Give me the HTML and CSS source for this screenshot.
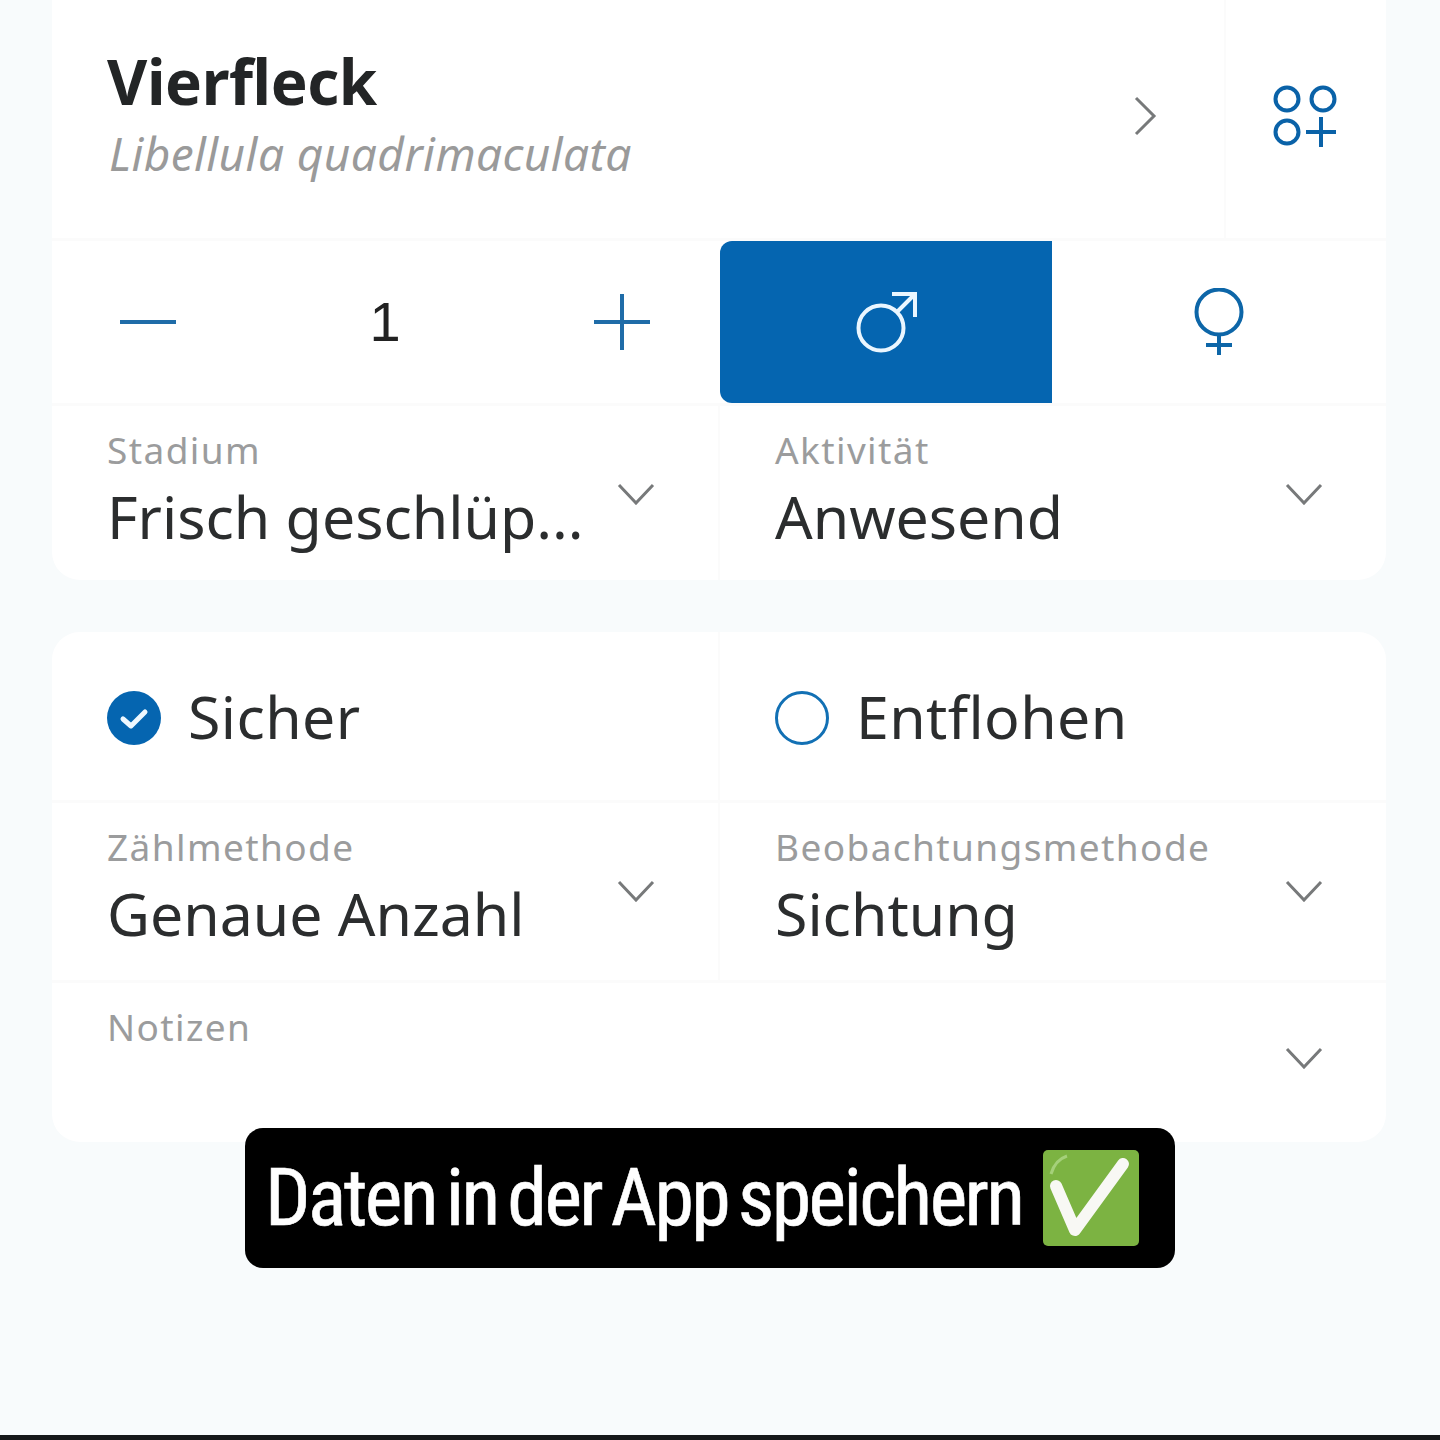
FILE: index.html
```html
<!DOCTYPE html>
<html lang="de">
<head>
<meta charset="utf-8">
<title>Vierfleck</title>
<link rel="stylesheet" href="styles.css">
</head>
<body>
<main class="page">
  <section class="card card-top">
    <header class="species">
      <div class="species-names">
        <h1 class="title">Vierfleck</h1>
        <p class="latin">Libellula quadrimaculata</p>
      </div>
      <svg class="chev-right" viewBox="0 0 24 42"><path d="M3 3 L21 21 L3 39"/></svg>
      <div class="species-action">
        <svg class="groups" viewBox="0 0 64 64"><g><circle cx="14" cy="14" r="11.5"/><circle cx="50" cy="14" r="11.5"/><circle cx="14" cy="47" r="11.5"/><path d="M33 47H63M48 32V62"/></g></svg>
      </div>
    </header>
    <div class="counter-row">
      <div class="stepper">
        <svg class="step" viewBox="0 0 56 56"><path d="M0 28H56"/></svg>
        <span class="count">1</span>
        <svg class="step" viewBox="0 0 56 56"><path d="M0 28H56M28 0V56"/></svg>
      </div>
      <div class="sex sex-on">
        <svg class="male" viewBox="0 0 64 64"><circle cx="27" cy="38" r="22.5"/><path d="M43 22L61 4M38 4H61V27"/></svg>
      </div>
      <div class="sex">
        <svg class="female" viewBox="0 0 52 68"><circle cx="26" cy="24" r="22.5"/><path d="M26 47V67M13 57H39"/></svg>
      </div>
    </div>
    <div class="split">
      <div class="field">
        <div class="field-text"><span class="label">Stadium</span><span class="value">Frisch geschlüp...</span></div>
        <svg class="chev" viewBox="0 0 38 22"><path d="M2 2L19 20L36 2"/></svg>
      </div>
      <div class="field">
        <div class="field-text"><span class="label">Aktivität</span><span class="value">Anwesend</span></div>
        <svg class="chev" viewBox="0 0 38 22"><path d="M2 2L19 20L36 2"/></svg>
      </div>
    </div>
  </section>

  <section class="card card-bottom">
    <div class="split checks">
      <div class="check">
        <svg class="tick" viewBox="0 0 54 54"><circle cx="27" cy="27" r="27"/><path d="M16 28L24 35L38 21"/></svg>
        <span class="check-label">Sicher</span>
      </div>
      <div class="check">
        <svg class="radio" viewBox="0 0 54 54"><circle cx="27" cy="27" r="25.5"/></svg>
        <span class="check-label">Entflohen</span>
      </div>
    </div>
    <div class="split split-mid">
      <div class="field">
        <div class="field-text"><span class="label">Zählmethode</span><span class="value">Genaue Anzahl</span></div>
        <svg class="chev" viewBox="0 0 38 22"><path d="M2 2L19 20L36 2"/></svg>
      </div>
      <div class="field">
        <div class="field-text"><span class="label">Beobachtungsmethode</span><span class="value">Sichtung</span></div>
        <svg class="chev" viewBox="0 0 38 22"><path d="M2 2L19 20L36 2"/></svg>
      </div>
    </div>
    <div class="notes">
      <span class="label">Notizen</span>
      <svg class="chev" viewBox="0 0 38 22"><path d="M2 2L19 20L36 2"/></svg>
    </div>
  </section>
</main>

<div class="caption">
  <span class="caption-text">Daten in der App speichern</span>
  <svg class="emoji" viewBox="0 0 96 96"><rect width="96" height="96" rx="5" fill="#7cb342"/><path d="M8 24Q12 10 24 6" fill="none" stroke="#a5d07a" stroke-width="3"/><path d="M13 36L32 80L80 14" fill="none" stroke="#f8f8f4" stroke-width="12" stroke-linejoin="round" stroke-linecap="round"/></svg>
</div>
<div class="screen-edge"></div>
</body>
</html>
```
FILE: styles.css
```css
* { box-sizing: border-box; }
html, body { margin: 0; padding: 0; }
body {
  width: 1440px;
  height: 1440px;
  background: #f8fbfc;
  font-family: "Noto Sans", "Open Sans", sans-serif;
  color: #262829;
  position: relative;
  overflow: hidden;
}
.page {
  display: flex;
  flex-direction: column;
  gap: 52px;
  padding: 0 54px 0 52px;
}
.card {
  background: #fbfbfb;
  border-radius: 28px;
  overflow: hidden;
  display: flex;
  flex-direction: column;
  gap: 3px;
}
.card-top { border-radius: 0 0 28px 28px; height: 580px; }
.card-bottom { height: 510px; }

.species {
  height: 238px;
  background: #fff;
  display: flex;
  align-items: center;
  padding: 0 0 7px 55px;
}
.species-names { flex: 1; padding-top: 3px; }
.title {
  margin: 0;
  font-size: 62px;
  line-height: 72px;
  font-weight: 700;
  color: #232526;
  letter-spacing: -0.4px;
}
.latin {
  margin: 0;
  font-size: 46px;
  line-height: 72px;
  font-style: italic;
  color: #9a9a9a;
  letter-spacing: 0.4px;
  padding-left: 2px;
}
.chev-right {
  width: 24px;
  height: 42px;
  fill: none;
  stroke: #77797a;
  stroke-width: 3;
  margin-right: 67px;
}
.species-action {
  width: 162px;
  height: calc(100% + 7px);
  margin-bottom: -7px;
  border-left: 2px solid #fbfbfb;
  display: flex;
  align-items: center;
  justify-content: center;
  padding: 0 2px 5px 0;
}
.groups {
  width: 64px;
  height: 64px;
  fill: none;
  stroke: #0a62a8;
  stroke-width: 4;
}

.counter-row {
  height: 162px;
  background: #fff;
  display: grid;
  grid-template-columns: 668px 332px 1fr;
}
.stepper {
  display: flex;
  align-items: center;
  justify-content: space-between;
  padding: 0 70px 0 68px;
}
.step {
  width: 56px;
  height: 56px;
  fill: none;
  stroke: #1f6ca8;
  stroke-width: 4;
}
.count {
  font-family: "Liberation Sans", sans-serif;
  font-size: 56px;
  line-height: 1;
  color: #222;
}
.sex { display: flex; align-items: center; justify-content: center; }
.sex-on { background: #0565b0; border-radius: 12px 0 0 12px; }
.male {
  width: 64px;
  height: 64px;
  fill: none;
  stroke: #eaf6ff;
  stroke-width: 4;
}
.female {
  width: 52px;
  height: 68px;
  fill: none;
  stroke: #0d66a8;
  stroke-width: 4;
}

.split {
  display: grid;
  grid-template-columns: 666px 1fr;
  column-gap: 2px;
  flex: 1;
}
.checks { flex: 0 0 168px; }
.split-mid { flex: 0 0 177px; }

.field {
  background: #fff;
  display: flex;
  justify-content: space-between;
  padding: 19px 63px 0 55px;
}
.field-text {
  display: flex;
  flex-direction: column;
  white-space: nowrap;
}
.label {
  font-size: 37px;
  line-height: 50px;
  color: #9b9c9d;
  letter-spacing: 1.4px;
}
.value {
  font-size: 59px;
  line-height: 80px;
  margin-top: 1px;
  color: #2b2d2e;
}
.chev {
  width: 38px;
  height: 22px;
  flex: none;
  margin-top: 58px;
  fill: none;
  stroke: #77797a;
  stroke-width: 3;
}
.check {
  background: #fff;
  display: flex;
  align-items: center;
  gap: 27px;
  padding: 4px 0 0 55px;
}
.tick { width: 54px; height: 54px; flex: none; }
.tick circle { fill: #0565b0; }
.tick path { fill: none; stroke: #eef8ff; stroke-width: 5; stroke-linecap: round; stroke-linejoin: round; }
.radio { width: 54px; height: 54px; flex: none; }
.radio circle { fill: none; stroke: #1270b4; stroke-width: 3; }
.check-label { font-size: 59px; line-height: 80px; margin-bottom: 4px; color: #2b2d2e; letter-spacing: 0.4px; }

.notes {
  flex: 1;
  background: #fff;
  display: flex;
  justify-content: space-between;
  padding: 19px 63px 0 55px;
}
.notes .chev { margin-top: 45px; }

.caption {
  position: absolute;
  left: 245px;
  top: 1128px;
  width: 930px;
  height: 140px;
  background: #000;
  border-radius: 18px;
  display: flex;
  align-items: center;
  padding-left: 20px;
  gap: 18px;
}
.caption-text {
  font-family: "Liberation Sans Narrow", "Roboto Condensed", "Liberation Sans", sans-serif;
  font-size: 80px;
  line-height: 100px;
  color: #fff;
  white-space: nowrap;
  display: block;
  width: 760px;
  flex: none;
  letter-spacing: -2.6px;
  word-spacing: -6px;
  -webkit-text-stroke: 0.6px #fff;
}
.emoji { width: 96px; height: 96px; flex: none; }
.screen-edge {
  position: absolute;
  left: 0;
  right: 0;
  bottom: 0;
  height: 5px;
  background: #16181a;
}
```
